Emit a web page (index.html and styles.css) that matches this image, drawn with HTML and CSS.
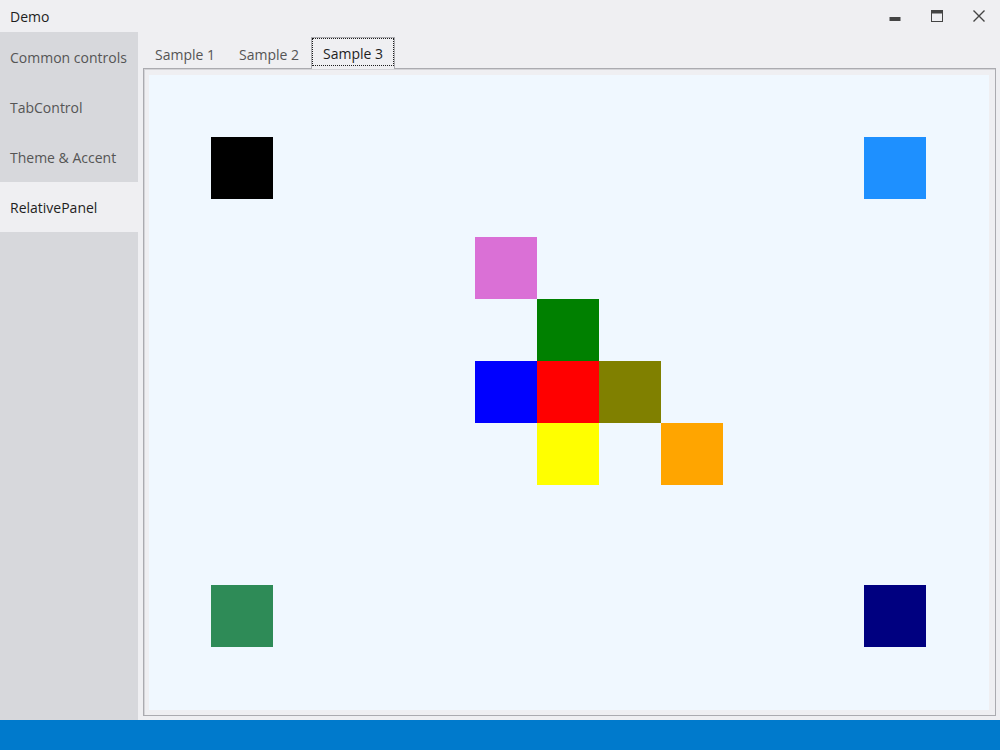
FILE: index.html
```html
<!DOCTYPE html>
<html>
<head>
<meta charset="utf-8">
<link rel="stylesheet" href="styles.css">
</head>
<body>
<div class="window">
  <div class="titlebar">
    <span class="title">Demo</span>
    <div class="controls">
      <span class="ctl"><svg width="12" height="12" viewBox="0 0 12 12"><rect x="0.5" y="7" width="11" height="4" fill="#444"/></svg></span>
      <span class="ctl"><svg width="12" height="12" viewBox="0 0 12 12"><rect x="0.5" y="0.5" width="11" height="11" fill="none" stroke="#444" stroke-width="1"/><rect x="0.5" y="0.5" width="11" height="3" fill="#444"/></svg></span>
      <span class="ctl"><svg width="12" height="12" viewBox="0 0 12 12"><path d="M0.5 0.5 L11.5 11.5 M11.5 0.5 L0.5 11.5" stroke="#444" stroke-width="1.4"/></svg></span>
    </div>
  </div>
  <div class="main">
    <nav class="sidebar">
      <div class="nav-item">Common controls</div>
      <div class="nav-item">TabControl</div>
      <div class="nav-item">Theme &amp; Accent</div>
      <div class="nav-item active">RelativePanel</div>
    </nav>
    <section class="content">
      <div class="tabs">
        <div class="tab">Sample 1</div>
        <div class="tab">Sample 2</div>
        <div class="tab selected"><span class="focus">Sample 3</span></div>
      </div>
      <div class="tabframe">
        <div class="panel">
          <div class="sq black" style="left:62px;top:62px"></div>
          <div class="sq dodger" style="left:715px;top:62px"></div>
          <div class="sq orchid" style="left:326px;top:162px"></div>
          <div class="sq green" style="left:388px;top:224px"></div>
          <div class="sq blue" style="left:326px;top:286px"></div>
          <div class="sq red" style="left:388px;top:286px"></div>
          <div class="sq olive" style="left:450px;top:286px"></div>
          <div class="sq yellow" style="left:388px;top:348px"></div>
          <div class="sq orange" style="left:512px;top:348px"></div>
          <div class="sq seagreen" style="left:62px;top:510px"></div>
          <div class="sq navy" style="left:715px;top:510px"></div>
        </div>
      </div>
    </section>
  </div>
  <div class="statusbar"></div>
</div>
</body>
</html>
```
FILE: styles.css
```css
* { box-sizing: border-box; }
html, body { margin: 0; padding: 0; }
body {
  font-family: "Open Sans", "Noto Sans", sans-serif;
  font-size: 14px;
  color: #1e1e1e;
  background: #efeff2;
}
.window {
  width: 1000px;
  height: 750px;
  display: flex;
  flex-direction: column;
  background: #efeff2;
}
.titlebar {
  height: 32px;
  display: flex;
  align-items: center;
  justify-content: space-between;
  padding-left: 10px;
}
.title { font-size: 14px; color: #1e1e1e; }
.controls { display: flex; height: 100%; }
.ctl {
  width: 42px;
  display: flex;
  align-items: center;
  justify-content: center;
}
.ctl svg { display: block; }
.main {
  flex: 1;
  display: flex;
  min-height: 0;
}
.sidebar {
  width: 138px;
  background: #d7d8dc;
  display: flex;
  flex-direction: column;
}
.nav-item {
  height: 50px;
  display: flex;
  align-items: center;
  padding-left: 10px;
  color: #555;
  white-space: nowrap;
}
.nav-item.active {
  background: #efeff2;
  color: #1e1e1e;
}
.content {
  flex: 1;
  display: flex;
  flex-direction: column;
  padding: 5px 4px 4px 5px;
}
.tabs {
  display: flex;
  height: 31px;
  align-items: flex-end;
  position: relative;
  z-index: 1;
}
.tab {
  height: 28px;
  padding: 0 12px;
  display: flex;
  align-items: center;
  color: #555;
}
.tab.selected {
  height: 32px;
  border: 1px solid #ababb0;
  border-bottom: none;
  background: #efeff2;
  padding: 0 0 3px 0;
  margin-bottom: -1px;
  align-items: stretch;
  color: #1e1e1e;
}
.focus {
  border: 1px dotted #1e1e1e;
  display: flex;
  align-items: center;
  padding: 2px 10px 0 10px;
}
.tabframe {
  flex: 1;
  border: 1px solid #ababb0;
  box-shadow: inset 1px 1px 0 #d4d4d8;
  padding: 6px 6px 5px 5px;
}
.panel {
  position: relative;
  width: 100%;
  height: 100%;
  background: #f0f8ff;
}
.sq {
  position: absolute;
  width: 62px;
  height: 62px;
}
.black { background: #000000; }
.dodger { background: #1e90ff; }
.orchid { background: #da70d6; }
.green { background: #008000; }
.blue { background: #0000ff; }
.red { background: #ff0000; }
.olive { background: #808000; }
.yellow { background: #ffff00; }
.orange { background: #ffa500; }
.seagreen { background: #2e8b57; }
.navy { background: #000080; }
.statusbar {
  height: 30px;
  background: #007acc;
}
```
